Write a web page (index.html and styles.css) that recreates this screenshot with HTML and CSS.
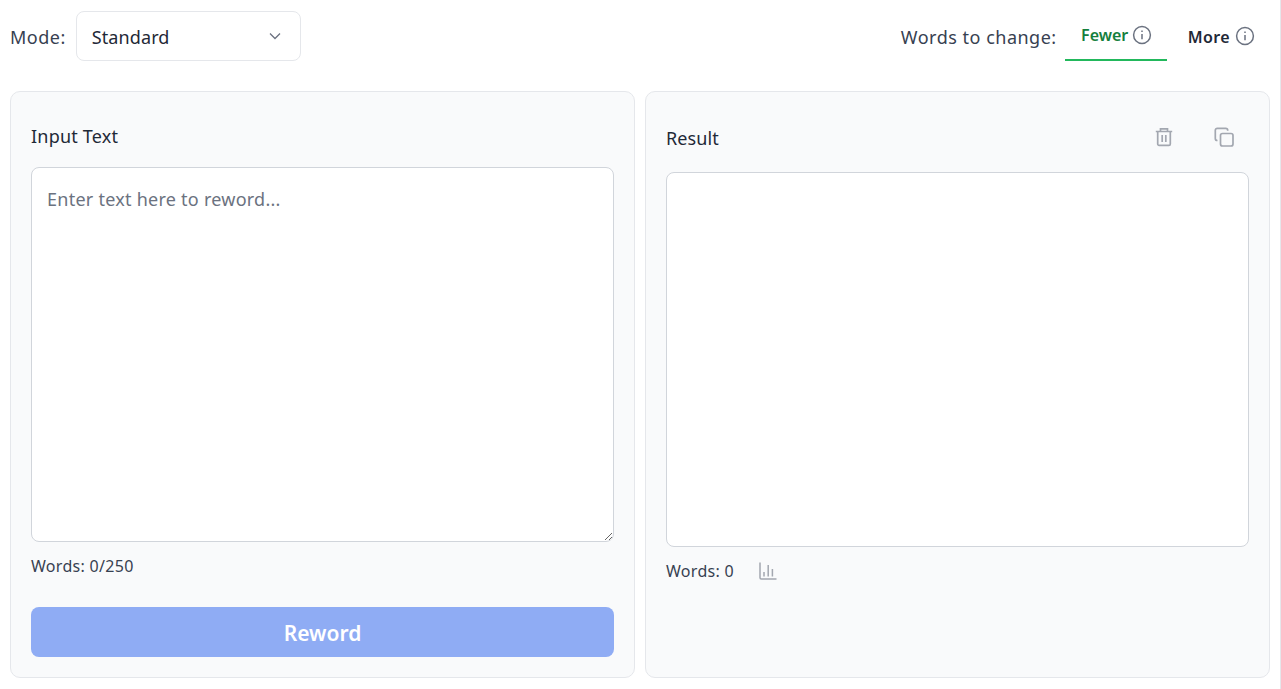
FILE: index.html
```html
<!DOCTYPE html>
<html lang="en">
<head>
  <meta charset="UTF-8">
  <meta name="viewport" content="width=device-width, initial-scale=1.0">
  <title>Reword</title>
  <link rel="stylesheet" href="styles.css">
</head>
<body>
  <div class="page">
    <div class="toolbar">
      <div class="mode">
        <span class="toolbar-label">Mode:</span>
        <div class="select">
          <span>Standard</span>
          <svg class="chevron" width="14" height="14" viewBox="0 0 14 14" fill="none" stroke="#6b7280" stroke-width="1.3"><path d="M2 4.5l5 5 5-5"/></svg>
        </div>
      </div>
      <div class="words-change">
        <span class="toolbar-label">Words to change:</span>
        <div class="tab tab-active">
          <span>Fewer</span>
          <svg class="info" width="20" height="20" viewBox="0 0 20 20" fill="none" stroke="#6b7280" stroke-width="1.5"><circle cx="10" cy="10" r="8.4"/><path d="M10 9v5.2M10 5.6v1.5"/></svg>
        </div>
        <div class="tab tab-more">
          <span>More</span>
          <svg class="info" width="20" height="20" viewBox="0 0 20 20" fill="none" stroke="#6b7280" stroke-width="1.5"><circle cx="10" cy="10" r="8.4"/><path d="M10 9v5.2M10 5.6v1.5"/></svg>
        </div>
      </div>
    </div>

    <div class="panels">
      <section class="panel">
        <div class="panel-head-input">Input Text</div>
        <textarea class="text-box input-box" placeholder="Enter text here to reword..."></textarea>
        <div class="count">Words: 0/250</div>
        <button class="reword" disabled>Reword</button>
      </section>

      <section class="panel">
        <div class="panel-head-result">
          <span>Result</span>
          <div class="actions">
            <svg width="20" height="20" viewBox="0 0 20 20" fill="none" stroke="#a3a7b0" stroke-width="1.7"><path d="M1.8 4.5h16.4M6.5 4.5V1.8h7v2.7M3.7 4.5v12.4a1.4 1.4 0 0 0 1.4 1.4h9.8a1.4 1.4 0 0 0 1.4-1.4V4.5M8.2 8v7M11.8 8v7"/></svg>
            <svg width="20" height="20" viewBox="0 0 20 20" fill="none" stroke="#a3a7b0" stroke-width="1.7"><rect x="6.5" y="6.5" width="12.5" height="12.5" rx="2"/><path d="M3.5 13.5h-.2a2 2 0 0 1-2-2V3.3a2 2 0 0 1 2-2h8.4a2 2 0 0 1 2 2v.4"/></svg>
          </div>
        </div>
        <div class="text-box result-box"></div>
        <div class="count count-result">
          <span>Words: 0</span>
          <svg width="18" height="18" viewBox="0 0 18 18" fill="none" stroke="#a3a7b0" stroke-width="1.5"><path d="M1 .5v15.2a1.2 1.2 0 0 0 1.2 1.2h15.3"/><path d="M5 10v4.5M9.2 3v11.5M13.4 7v7.5"/></svg>
        </div>
      </section>
    </div>
  </div>
</body>
</html>
```

FILE: styles.css
```css
html, body {
  margin: 0;
  height: 100%;
}
body {
  font-family: "Noto Sans", "Open Sans", sans-serif;
  color: #1f2937;
  background-color: white;
  overflow: hidden;
}
.page {
  box-sizing: border-box;
  height: 689px;
  padding: 11px 10px 11px;
  border-right: 1px solid #e5e7eb;
}
.toolbar {
  display: flex;
  justify-content: space-between;
  align-items: center;
  height: 50px;
  margin-bottom: 30px;
}
.mode, .words-change {
  display: flex;
  align-items: center;
}
.toolbar-label {
  padding-top: 2px;
  font-size: 18px;
  letter-spacing: 0.5px;
  color: #374151;
}
.mode .toolbar-label {
  margin-right: 10px;
}
.select {
  box-sizing: border-box;
  display: flex;
  justify-content: space-between;
  align-items: center;
  width: 225px;
  height: 50px;
  padding: 2px 18px 0 15px;
  background-color: white;
  border: 1px solid #e5e7eb;
  border-radius: 8px;
  font-size: 18px;
  letter-spacing: 0.1px;
}
.chevron {
  margin-top: -3px;
}
.words-change {
  height: 50px;
}
.words-change .toolbar-label {
  margin-right: 8px;
}
.tab {
  box-sizing: border-box;
  display: flex;
  justify-content: center;
  align-items: center;
  gap: 4px;
  height: 50px;
  font-size: 16px;
  font-weight: 600;
  color: #1f2937;
}
.tab-active {
  width: 102px;
  padding-left: 2px;
  color: #15803d;
  border-bottom: 2px solid #22b85c;
}
.tab-more {
  gap: 5px;
  padding: 2px 15px 0 21px;
  letter-spacing: 0.4px;
}
.tab-more .info {
  margin-top: -2px;
}
.panels {
  display: flex;
  gap: 10px;
  height: 587px;
}
.panel {
  box-sizing: border-box;
  flex: 1;
  display: flex;
  flex-direction: column;
  padding: 0 20px;
  background-color: #f9fafb;
  border: 1px solid #e5e7eb;
  border-radius: 10px;
}
.panel-head-input {
  box-sizing: border-box;
  height: 75px;
  padding-top: 32px;
  font-size: 18px;
  letter-spacing: 0.2px;
}
.panel-head-result {
  box-sizing: border-box;
  display: flex;
  justify-content: space-between;
  align-items: center;
  height: 80px;
  padding-top: 12px;
  font-size: 18px;
  letter-spacing: 0.1px;
}
.actions {
  display: flex;
  gap: 40px;
  margin-right: 15px;
  margin-bottom: 2px;
}
.text-box {
  box-sizing: border-box;
  display: block;
  width: 100%;
  height: 375px;
  background-color: white;
  border: 1px solid #d1d5db;
  border-radius: 8px;
}
.input-box {
  padding: 15px;
  font-family: inherit;
  font-size: 18px;
  line-height: 32px;
  letter-spacing: 0.25px;
  color: #1f2937;
  resize: vertical;
  outline: none;
}
.input-box::placeholder {
  color: #6b7280;
  opacity: 1;
}
.count {
  margin-top: 12px;
  font-size: 16px;
  line-height: 24px;
  letter-spacing: 0.3px;
  color: #374151;
}
.count-result {
  display: flex;
  align-items: center;
  gap: 25px;
}
.reword {
  display: block;
  width: 100%;
  height: 50px;
  margin-top: 29px;
  padding-top: 3px;
  background-color: #8facf4;
  color: white;
  border: none;
  border-radius: 8px;
  font-family: inherit;
  font-size: 21px;
  font-weight: 600;
}
```
